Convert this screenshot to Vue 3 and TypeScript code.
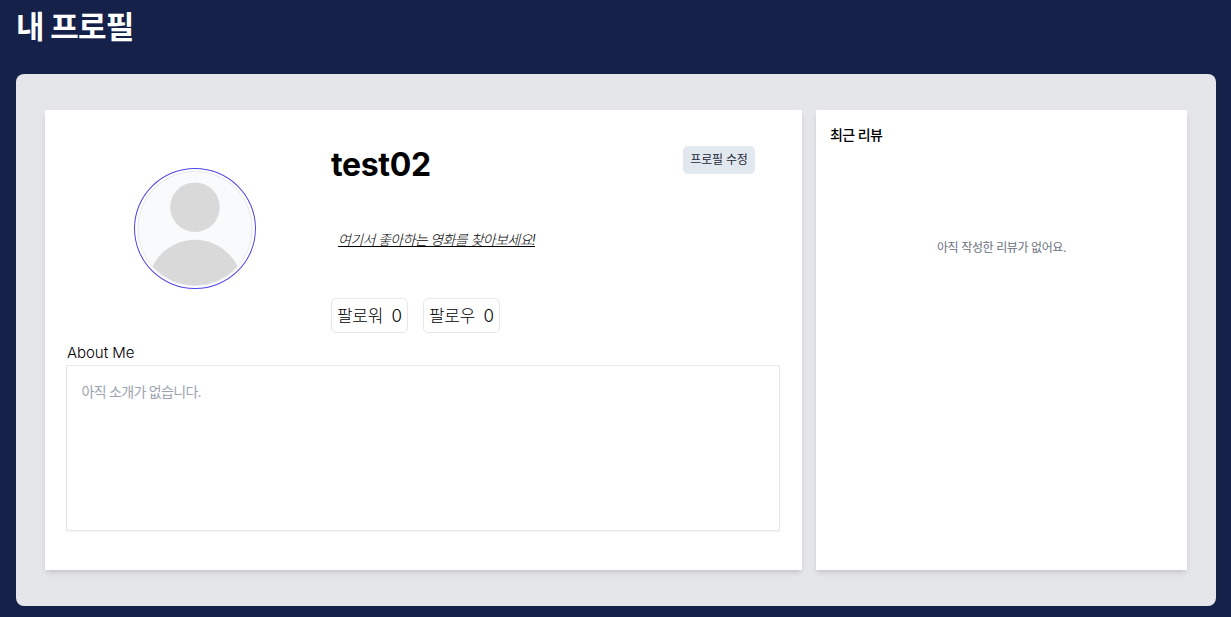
<script setup lang="ts">
import { ref } from 'vue'

interface FollowStat {
  label: string
  count: number
}

const username = ref('test02')
const about = ref('')
const stats = ref<FollowStat[]>([
  { label: '팔로워', count: 0 },
  { label: '팔로우', count: 0 },
])
</script>

<template>
  <div class="page">
    <h1 class="title">내 프로필</h1>
    <main class="board">
      <section class="panel profile">
        <div class="summary">
          <div class="avatar-cell">
            <div class="avatar">
              <svg viewBox="0 0 120 120" aria-hidden="true">
                <defs>
                  <clipPath id="face"><circle cx="60" cy="60" r="57.5" /></clipPath>
                </defs>
                <circle cx="60" cy="60" r="57.5" fill="#f9fafc" />
                <g clip-path="url(#face)" fill="#d9d9d9">
                  <circle cx="60" cy="38.5" r="25" />
                  <circle cx="60" cy="119.2" r="47.8" />
                </g>
                <circle cx="60" cy="60" r="57.7" fill="none" stroke="#e5e7eb" stroke-width="1" />
              </svg>
            </div>
          </div>
          <div class="info">
            <div class="heading">
              <h2 class="name">{{ username }}</h2>
              <button class="edit" type="button"><span>프로필 수정</span></button>
            </div>
            <a class="find"><span>여기서 좋아하는 영화를 찾아보세요!</span></a>
            <div class="stats">
              <div v-for="s in stats" :key="s.label" class="stat">
                <span class="label">{{ s.label }}</span>
                <span class="count">{{ s.count }}</span>
              </div>
            </div>
          </div>
        </div>
        <h3 class="about-title">About Me</h3>
        <div class="about">
          <span>{{ about || '아직 소개가 없습니다.' }}</span>
        </div>
      </section>
      <aside class="panel reviews">
        <h3 class="reviews-title"><span>최근 리뷰</span></h3>
        <p class="empty"><span>아직 작성한 리뷰가 없어요.</span></p>
      </aside>
    </main>
  </div>
</template>

<style>
html,
body {
  margin: 0;
  background: #16214a;
}
</style>

<style scoped>
.page {
  box-sizing: border-box;
  height: 617px;
  padding: 0 15px 11px 16px;
  overflow: hidden;
  background: #16214a;
  color: #000;
  font-family: Inter, 'Noto Sans CJK KR', sans-serif;
}
.page * {
  box-sizing: border-box;
}
h1,
h2,
h3,
p {
  margin: 0;
}
.title {
  height: 74px;
  padding-top: 7px;
  color: #fff;
  font-size: 31px;
  line-height: 40px;
  font-weight: 700;
  letter-spacing: -0.8px;
}
.board {
  display: flex;
  gap: 14px;
  height: 532px;
  padding: 36px 29px;
  border-radius: 8px;
  background: #e5e6ea;
}
.panel {
  height: 460px;
  background: #fff;
  box-shadow: 0 4px 6px -1px rgba(0, 0, 0, 0.1), 0 2px 4px -2px rgba(0, 0, 0, 0.1);
}
.profile {
  width: 757px;
  padding: 36px 22px 0 21px;
}
.summary {
  display: flex;
  height: 194px;
}
.avatar-cell {
  width: 265px;
  padding: 22px 0 0 68px;
}
.avatar {
  width: 122px;
  height: 121px;
  border: 1px solid #4f46e5;
  border-radius: 50%;
}
.avatar svg {
  display: block;
  width: 120px;
  height: 119px;
}
.info {
  flex: 1;
}
.heading {
  display: flex;
  justify-content: space-between;
  height: 84px;
  padding-right: 25px;
}
.name {
  padding-top: 1px;
  font-size: 32px;
  line-height: 36px;
  font-weight: 700;
  letter-spacing: -0.35px;
}
.edit {
  width: 72px;
  height: 28px;
  padding: 0;
  border: 0;
  border-radius: 5px;
  background: #e2e8f0;
  color: #1f2937;
  font: 400 12px/28px Inter, 'Noto Sans CJK KR', sans-serif;
  letter-spacing: -0.2px;
}
.find {
  display: block;
  height: 68px;
  padding-left: 7px;
  font-size: 14px;
  line-height: 20px;
  font-weight: 300;
  font-style: italic;
  letter-spacing: -0.63px;
  text-decoration: underline;
}
.stats {
  display: flex;
  gap: 15px;
}
.stat {
  display: flex;
  justify-content: space-between;
  width: 77px;
  height: 35px;
  padding: 1px 5px 0;
  border: 1px solid #e5e7eb;
  border-radius: 5px;
  font-size: 17px;
  line-height: 33px;
  font-weight: 300;
}
.label {
  letter-spacing: -0.3px;
}
.count {
  font-weight: 350;
}
.about-title {
  height: 25px;
  padding: 2px 0 0 1px;
  font-size: 15px;
  line-height: 21px;
  font-weight: 350;
  letter-spacing: -0.05px;
}
.about {
  width: 714px;
  height: 166px;
  padding: 16px 14.5px;
  border: 1px solid #e5e7eb;
  color: #9ca3af;
  font-size: 14px;
  line-height: 20px;
  letter-spacing: -0.7px;
  box-shadow: 0 1px 2px rgba(0, 0, 0, 0.05);
}
.reviews {
  width: 371px;
  padding: 14px;
}
.reviews-title {
  font-size: 14px;
  line-height: 21px;
  font-weight: 500;
  letter-spacing: -0.6px;
}
.empty {
  padding-top: 93px;
  color: #6b7280;
  font-size: 12px;
  line-height: 20px;
  letter-spacing: -0.4px;
  text-align: center;
}
</style>
